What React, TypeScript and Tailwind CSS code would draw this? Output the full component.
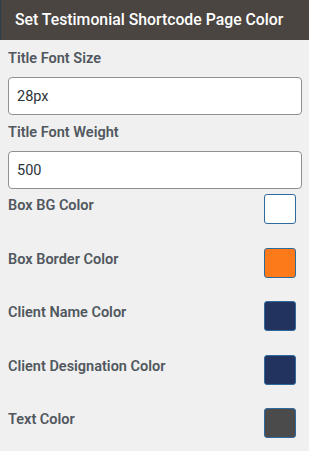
const fields = [
  { label: "Title Font Size", value: "28px" },
  { label: "Title Font Weight", value: "500" },
];

const swatches = [
  { label: "Box BG Color", color: "bg-white" },
  { label: "Box Border Color", color: "bg-[#fd7a1b]" },
  { label: "Client Name Color", color: "bg-[#22335f]" },
  { label: "Client Designation Color", color: "bg-[#22335f]" },
  { label: "Text Color", color: "bg-[#4b4b4b]" },
];

export default function App() {
  return (
    <div className="w-[309px] h-[451px] bg-[#f0f0f0] font-['Roboto',sans-serif] overflow-hidden">
      <div className="h-[40px] bg-[#4a4541] border-l border-[#2f3d48] flex items-center pl-[14px]">
        <h2 className="text-white text-[15.8px] font-medium leading-none">Set Testimonial Shortcode Page Color</h2>
      </div>

      <div className="px-2 pt-[9px]">
        {fields.map((f) => (
          <div key={f.label} className="mb-[8px]">
            <label className="block text-[14.5px] font-semibold leading-[20px] text-[#50575e]">{f.label}</label>
            <input
              readOnly
              value={f.value}
              className="mt-[8px] w-[294px] h-[38px] bg-white border border-[#8c8f94] rounded-[4px] px-[8px] text-[14.5px] text-[#2c3338] outline-none"
            />
          </div>
        ))}

        <div className="flex flex-col gap-[23.5px] mt-[-3px]">
          {swatches.map((s) => (
            <div key={s.label} className="flex items-start justify-between pr-[5px]">
              <span className="mt-[2px] text-[14.5px] font-semibold leading-[20px] text-[#50575e]">{s.label}</span>
              <div className={`w-[32px] h-[30px] rounded-[3px] border border-[#2f6a9c] ${s.color}`} />
            </div>
          ))}
        </div>
      </div>
    </div>
  );
}
